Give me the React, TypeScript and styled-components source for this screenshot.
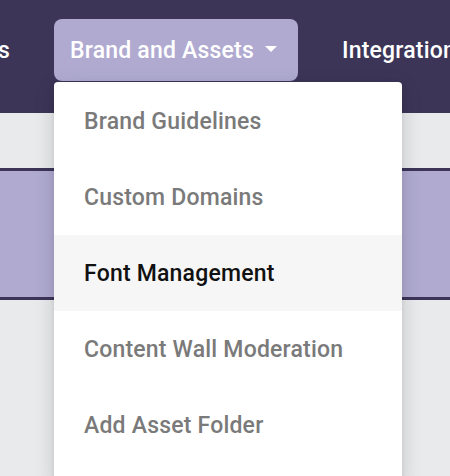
import React from "react";
import styled, { createGlobalStyle } from "styled-components";

const Global = createGlobalStyle`
  html, body { margin: 0; padding: 0; }
  body {
    background: #e9eaec;
    font-family: Roboto, "Noto Sans", "Liberation Sans", sans-serif;
    overflow: hidden;
  }
`;

const Page = styled.div`
  position: relative;
  width: 450px;
  height: 476px;
  overflow: hidden;
  background: #e9eaec;
`;

const Nav = styled.nav`
  height: 113px;
  background: #3c3558;
  box-sizing: border-box;
  padding-top: 19px;
  display: flex;
  align-items: flex-start;
  gap: 28px;
  overflow: hidden;
  white-space: nowrap;
`;

const Clip = styled.div`
  width: 26px;
  flex: none;
  display: flex;
  justify-content: flex-end;
  overflow: hidden;
`;

const NavItem = styled.div<{ $active?: boolean }>`
  flex: none;
  height: 62px;
  box-sizing: border-box;
  padding: 0 ${(p) => (p.$active ? "21px" : "16px")} 0 16px;
  display: flex;
  align-items: center;
  gap: 11px;
  border-radius: 8px;
  background: ${(p) => (p.$active ? "#b0aad1" : "transparent")};
  color: #ffffff;
  font-size: 23px;
  font-weight: 500;
  letter-spacing: 0.2px;
`;

const Caret = styled.span`
  width: 0;
  height: 0;
  border-left: 6px solid transparent;
  border-right: 6px solid transparent;
  border-top: 6px solid #ffffff;
  margin-top: -3px;
`;

const Gap = styled.div`
  height: 55px;
`;

const Band = styled.div`
  height: 126px;
  background: #b0aad1;
  border-top: 3px solid #3c3558;
  border-bottom: 3px solid #3c3558;
`;

const Menu = styled.div`
  position: absolute;
  top: 82px;
  left: 54px;
  width: 348px;
  padding: 1px 0 24px;
  background: #ffffff;
  border-radius: 4px 4px 0 0;
  box-shadow: 0 6px 22px rgba(0, 0, 0, 0.14), 0 2px 6px rgba(0, 0, 0, 0.08);
`;

const MenuItem = styled.div<{ $active?: boolean }>`
  height: 76px;
  padding-left: 30px;
  display: flex;
  align-items: center;
  font-size: 23px;
  font-weight: 500;
  letter-spacing: 0.2px;
  color: ${(p) => (p.$active ? "#111111" : "#7a7a7a")};
  background: ${(p) => (p.$active ? "#f6f6f6" : "transparent")};
`;

const items = [
  "Brand Guidelines",
  "Custom Domains",
  "Font Management",
  "Content Wall Moderation",
  "Add Asset Folder",
];

export default function App() {
  return (
    <Page>
      <Global />
      <Nav>
        <Clip>
          <NavItem>Campaigns</NavItem>
        </Clip>
        <NavItem $active>
          Brand and Assets
          <Caret />
        </NavItem>
        <NavItem>Integrations</NavItem>
      </Nav>
      <Gap />
      <Band />
      <Menu>
        {items.map((t) => (
          <MenuItem key={t} $active={t === "Font Management"}>
            {t}
          </MenuItem>
        ))}
      </Menu>
    </Page>
  );
}
